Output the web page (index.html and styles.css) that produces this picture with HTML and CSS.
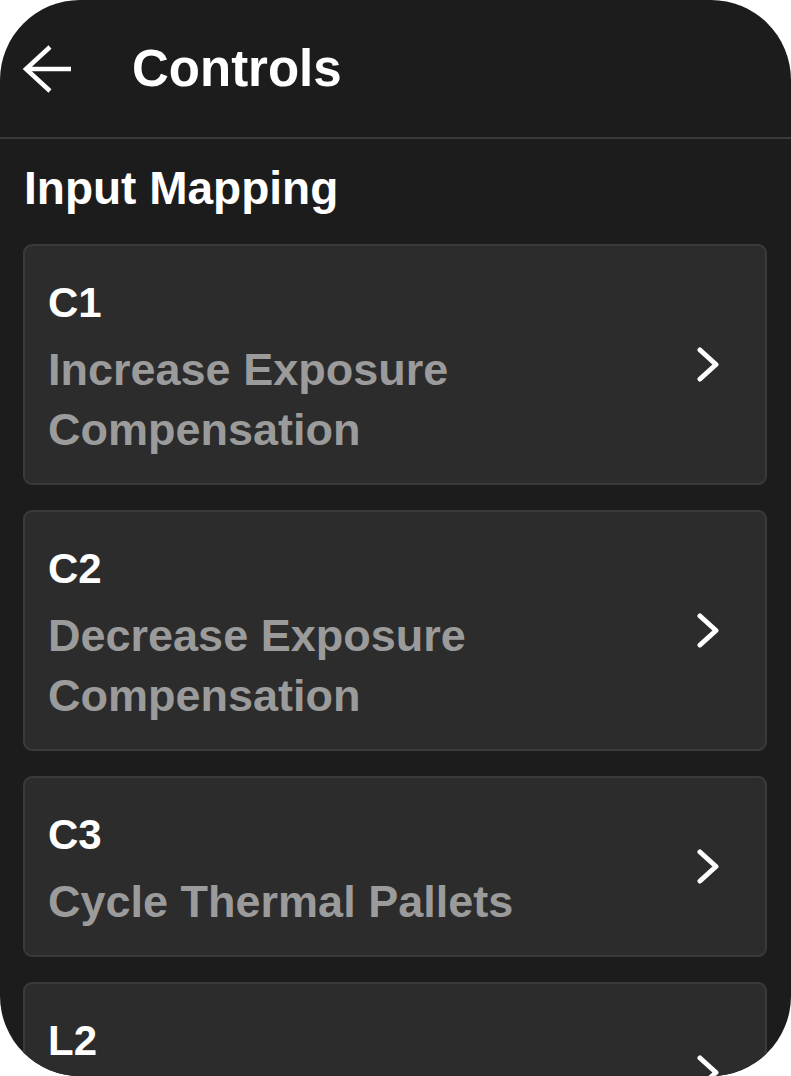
FILE: index.html
```html
<!DOCTYPE html>
<html lang="en">
<head>
<meta charset="utf-8">
<title>Controls</title>
<link rel="stylesheet" href="styles.css">
</head>
<body>
<div class="screen">
  <header class="topbar">
    <svg class="back" width="50" height="50" viewBox="0 0 50 50" aria-hidden="true">
      <path d="M28 3 L4 25 L28 47 M4 25 H49" fill="none" stroke="#fff" stroke-width="4.5" stroke-linejoin="miter"/>
    </svg>
    <h1 class="title">Controls</h1>
  </header>
  <main class="content">
    <h2 class="section">Input Mapping</h2>
    <div class="list">
      <div class="card">
        <div class="text">
          <div class="key">C1</div>
          <div class="desc">Increase Exposure Compensation</div>
        </div>
        <svg class="chev" width="22" height="35" viewBox="0 0 22 35" aria-hidden="true"><polyline points="3,3 19,17.5 3,32" fill="none" stroke="#fff" stroke-width="5" stroke-linecap="round" stroke-linejoin="round"/></svg>
      </div>
      <div class="card">
        <div class="text">
          <div class="key">C2</div>
          <div class="desc">Decrease Exposure Compensation</div>
        </div>
        <svg class="chev" width="22" height="35" viewBox="0 0 22 35" aria-hidden="true"><polyline points="3,3 19,17.5 3,32" fill="none" stroke="#fff" stroke-width="5" stroke-linecap="round" stroke-linejoin="round"/></svg>
      </div>
      <div class="card">
        <div class="text">
          <div class="key">C3</div>
          <div class="desc">Cycle Thermal Pallets</div>
        </div>
        <svg class="chev" width="22" height="35" viewBox="0 0 22 35" aria-hidden="true"><polyline points="3,3 19,17.5 3,32" fill="none" stroke="#fff" stroke-width="5" stroke-linecap="round" stroke-linejoin="round"/></svg>
      </div>
      <div class="card">
        <div class="text">
          <div class="key">L2</div>
          <div class="desc desc-empty"></div>
        </div>
        <svg class="chev" width="22" height="35" viewBox="0 0 22 35" aria-hidden="true"><polyline points="3,3 19,17.5 3,32" fill="none" stroke="#fff" stroke-width="5" stroke-linecap="round" stroke-linejoin="round"/></svg>
      </div>
    </div>
  </main>
</div>
</body>
</html>
```
FILE: styles.css
```css
html, body {
  margin: 0;
  padding: 0;
  background: #ffffff;
}

body {
  font-family: "Liberation Sans", Arial, sans-serif;
  color: #ffffff;
}

.screen {
  width: 791px;
  height: 1076px;
  background: #1c1c1c;
  border-radius: 80px;
  overflow: hidden;
  box-sizing: border-box;
}

.topbar {
  height: 137px;
  border-bottom: 2px solid #3a3a3a;
  display: flex;
  align-items: center;
  padding-left: 22px;
  gap: 60px;
}

.back {
  display: block;
  flex: none;
}

.title {
  margin: 0;
  font-size: 51px;
  line-height: 60px;
  font-weight: 700;
  color: #ffffff;
}

.content {
  padding: 21px 24px 0 23px;
}

.section {
  margin: 0 0 28px 1px;
  font-size: 46px;
  line-height: 56px;
  font-weight: 700;
  color: #ffffff;
}

.list {
  display: flex;
  flex-direction: column;
  gap: 25px;
}

.card {
  display: flex;
  align-items: center;
  gap: 20px;
  background: #2c2c2c;
  border: 2px solid #3a3a3a;
  border-radius: 9px;
  padding: 32px 46px 23px 23px;
}

.text {
  flex: 1;
  display: flex;
  flex-direction: column;
  gap: 12px;
}

.key {
  font-size: 42px;
  line-height: 50px;
  font-weight: 700;
  color: #ffffff;
}

.desc {
  font-size: 45px;
  line-height: 60px;
  font-weight: 700;
  color: #9b9b9b;
}

.desc-empty {
  height: 60px;
}

.chev {
  display: block;
  flex: none;
  margin-bottom: 9px;
}
```
